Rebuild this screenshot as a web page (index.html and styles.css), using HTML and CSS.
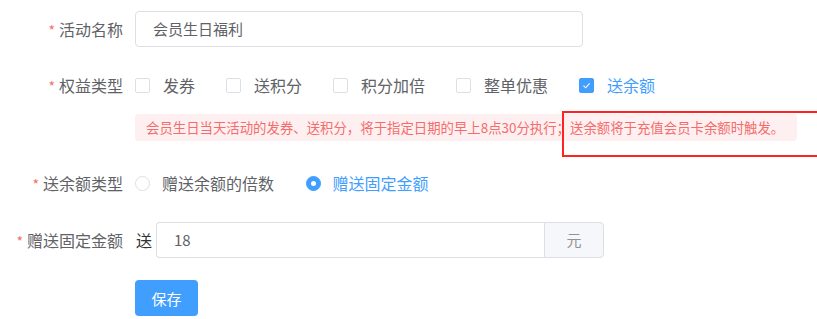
FILE: index.html
```html
<!DOCTYPE html>
<html lang="zh-CN">
<head>
    <meta charset="UTF-8">
    <title>会员生日福利</title>
    <link rel="stylesheet" href="styles.css">
</head>
<body>
<div class="form-wrap">
    <!-- 活动名称 -->
    <div class="form-item item-name">
        <label class="form-label"><span class="req">*</span>活动名称</label>
        <div class="form-content">
            <div class="input name-input">会员生日福利</div>
        </div>
    </div>
    <!-- 权益类型 -->
    <div class="form-item item-type">
        <label class="form-label"><span class="req">*</span>权益类型</label>
        <div class="form-content">
            <div class="check-group">
                <span class="check"><span class="check-box"></span><span class="check-text">发券</span></span>
                <span class="check"><span class="check-box"></span><span class="check-text">送积分</span></span>
                <span class="check"><span class="check-box"></span><span class="check-text">积分加倍</span></span>
                <span class="check"><span class="check-box"></span><span class="check-text">整单优惠</span></span>
                <span class="check is-checked">
                    <span class="check-box">
                        <svg width="15" height="15" viewBox="0 0 15 15"><path d="M4.5 7.6 L6.7 9.8 L10.6 5.4" fill="none" stroke="#fff" stroke-width="1.1"/></svg>
                    </span><span class="check-text">送余额</span>
                </span>
            </div>
            <div class="alert">会员生日当天活动的发券、送积分，将于指定日期的早上8点30分执行；送余额将于充值会员卡余额时触发。</div>
        </div>
    </div>
    <!-- 送余额类型 -->
    <div class="form-item item-radio">
        <label class="form-label"><span class="req">*</span>送余额类型</label>
        <div class="form-content">
            <span class="radio"><span class="radio-dot"></span><span class="radio-text">赠送余额的倍数</span></span>
            <span class="radio is-checked"><span class="radio-dot"></span><span class="radio-text">赠送固定金额</span></span>
        </div>
    </div>
    <!-- 赠送固定金额 -->
    <div class="form-item item-amount">
        <label class="form-label"><span class="req">*</span>赠送固定金额</label>
        <div class="form-content amount-row">
            <span class="prefix">送</span>
            <div class="input-group">
                <div class="input amount-input">18</div>
                <div class="append">元</div>
            </div>
        </div>
    </div>
    <div class="form-item item-btn">
        <div class="form-label"></div>
        <div class="form-content">
            <button class="btn-primary">保存</button>
        </div>
    </div>
    <div class="mark-box"></div>
</div>
</body>
</html>
```

FILE: styles.css
```css
body {
    margin: 0;
    padding: 0;
    background: #fff;
    font-family: "Noto Sans CJK SC", "Noto Sans", sans-serif;
    color: #606266;
}
.form-wrap {
    position: relative;
    padding-top: 11px;
}
.form-item {
    display: flex;
    align-items: flex-start;
}
.form-label {
    width: 123px;
    padding-right: 12px;
    text-align: right;
    font-size: 16px;
    line-height: 36px;
    color: #606266;
    flex-shrink: 0;
}
.req {
    color: #f56c6c;
    font-size: 14px;
    margin-right: 4px;
}
.form-content {
    line-height: 36px;
    font-size: 16px;
}
.item-type { margin-top: 19px; }
.item-radio { margin-top: 24px; }
.item-amount { margin-top: 20px; }
.item-btn { margin-top: 21px; }

.input {
    box-sizing: border-box;
    height: 36px;
    border: 1px solid #dcdfe6;
    border-radius: 4px;
    padding: 0 17px;
    line-height: 34px;
    font-size: 15px;
    color: #606266;
    background: #fff;
}
.name-input { width: 448px; }

.check-group {
    display: flex;
    height: 36px;
    align-items: center;
}
.check {
    display: inline-flex;
    align-items: center;
    margin-right: 31px;
}
.check-box {
    box-sizing: border-box;
    width: 15px;
    height: 15px;
    border: 1px solid #dcdfe6;
    border-radius: 2px;
    background: #fff;
    margin-right: 13px;
    display: inline-block;
}
.check-box svg { display: block; margin: -1px; }
.check.is-checked .check-box {
    background: #409eff;
    border-color: #409eff;
}
.check.is-checked .check-text { color: #409eff; }

.alert {
    margin-top: 11px;
    width: 662px;
    box-sizing: border-box;
    height: 27px;
    line-height: 27px;
    padding: 0 11px;
    background: #fef0f0;
    color: #f56c6c;
    font-size: 13.4px;
    border-radius: 4px;
    white-space: nowrap;
}

.radio {
    display: inline-flex;
    align-items: center;
    margin-right: 28px;
    vertical-align: top;
    height: 36px;
}
.radio-dot {
    box-sizing: border-box;
    width: 15px;
    height: 15px;
    border: 1px solid #dcdfe6;
    border-radius: 50%;
    margin-right: 12px;
    background: #fff;
    position: relative;
}
.radio.is-checked .radio-dot {
    border-color: #409eff;
    background: #409eff;
}
.radio.is-checked .radio-dot::after {
    content: "";
    position: absolute;
    left: 4px;
    top: 4px;
    width: 5px;
    height: 5px;
    border-radius: 50%;
    background: #fff;
}
.radio.is-checked .radio-text { color: #409eff; }

.amount-row {
    display: flex;
    align-items: center;
}
.prefix {
    margin-left: 1px;
    margin-right: 4px;
    color: #303133;
}
.input-group {
    display: flex;
    width: 448px;
}
.amount-input {
    flex: 1;
    border-radius: 4px 0 0 4px;
    border-right: none;
}
.append {
    box-sizing: border-box;
    width: 60px;
    height: 36px;
    line-height: 34px;
    text-align: center;
    background: #f5f7fa;
    border: 1px solid #dcdfe6;
    border-radius: 0 4px 4px 0;
    color: #909399;
    font-size: 15px;
}

.btn-primary {
    width: 63px;
    height: 36px;
    border: none;
    border-radius: 4px;
    background: #409eff;
    color: #fff;
    font-family: inherit;
    font-size: 15px;
    padding: 0;
    display: block;
}

/* red mark drawn over the screenshot */
.mark-box {
    position: absolute;
    left: 562px;
    top: 111px;
    width: 270px;
    height: 46px;
    border: 2px solid #f22;
    box-sizing: border-box;
}
```
